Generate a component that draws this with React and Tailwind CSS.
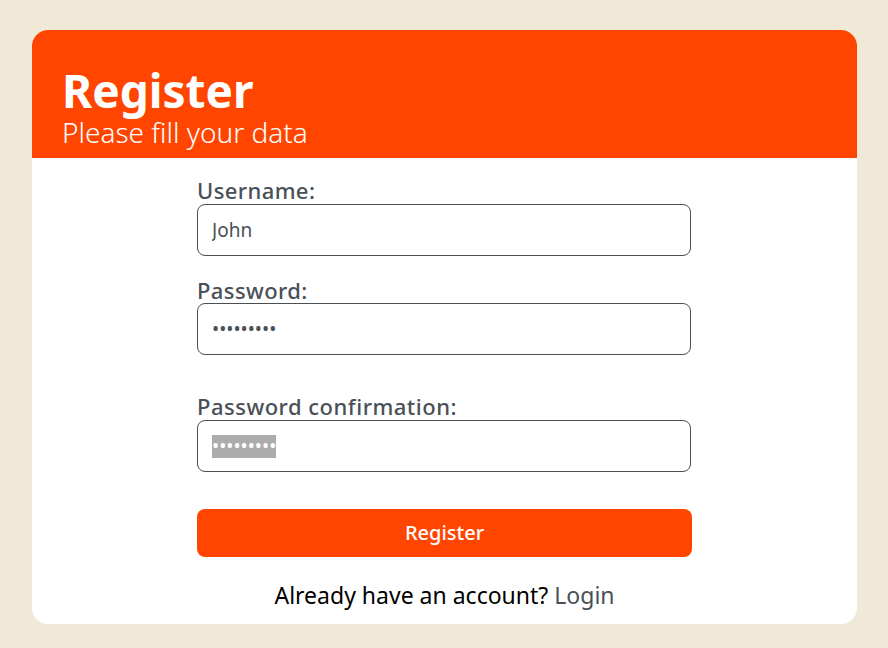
import React from "react";

export default function App() {
  const font = { fontFamily: '"Noto Sans", "Open Sans", sans-serif' };
  return (
    <div className="min-h-[648px] w-full bg-[#f1e9d8] pt-[30px] px-[32px] pb-[24px]" style={font}>
      <div className="w-[825px] h-[594px] bg-white rounded-[16px] overflow-hidden flex flex-col">
        <div className="bg-[#ff4500] h-[128px] pl-[30px] pt-[37px] text-white">
          <h1 className="text-[46px] font-bold leading-[46px]">Register</h1>
          <p className="text-[28px] font-light leading-[38px]">Please fill your data</p>
        </div>
        <div className="w-[495px] mx-auto pt-[19px] flex flex-col text-[#495057]">
          <label className="text-[22px] font-medium leading-[26px] tracking-[0.4px]">Username:</label>
          <input
            readOnly
            value="John"
            className="mt-[1px] h-[52px] w-[494px] rounded-[8px] border border-[#4a4f56] px-[14px] text-[19px] text-[#495057] outline-none"
            style={font}
          />
          <label className="mt-[21px] text-[22px] font-medium leading-[26px] tracking-[0.4px]">Password:</label>
          <div className="mt-0 h-[52px] w-[494px] rounded-[8px] border border-[#4a4f56] px-[14px] flex items-center">
            <span className="text-[19px] text-[#495057] leading-[23px]">•••••••••</span>
          </div>
          <label className="mt-[38px] text-[22px] font-medium leading-[26px] tracking-[0.5px]">Password confirmation:</label>
          <div className="mt-[1px] h-[52px] w-[494px] rounded-[8px] border border-[#4a4f56] px-[14px] flex items-center">
            <span className="text-[19px] text-white bg-[#acacac] leading-[23px]">•••••••••</span>
          </div>
          <button className="mt-[37px] h-[48px] w-[495px] rounded-[8px] bg-[#ff4500] text-white text-[20px] font-medium">
            Register
          </button>
          <p className="mt-[23px] text-center text-[23px] leading-[30px] text-black">
            Already have an account? <a className="text-[#495057]">Login</a>
          </p>
        </div>
      </div>
    </div>
  );
}
